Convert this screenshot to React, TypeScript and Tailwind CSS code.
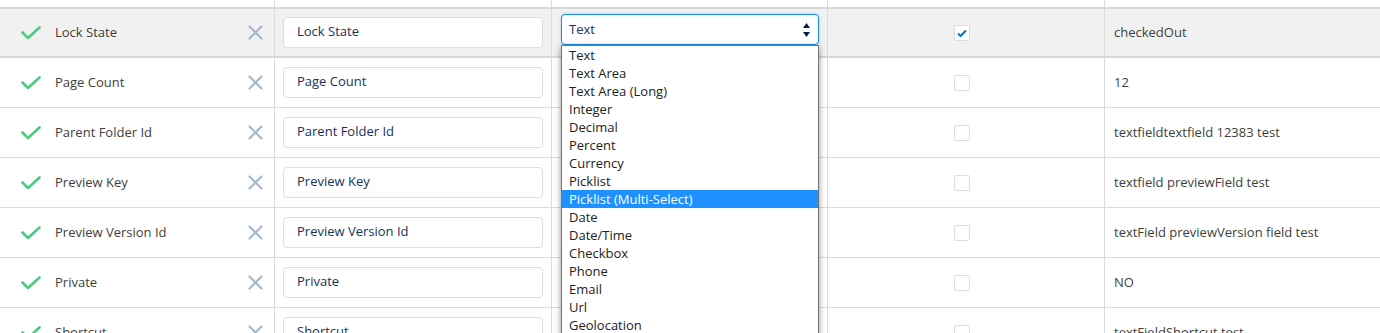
import React from "react";

const rows = [
  { label: "Lock State", value: "checkedOut", checked: true },
  { label: "Page Count", value: "12" },
  { label: "Parent Folder Id", value: "textfieldtextfield 12383 test" },
  { label: "Preview Key", value: "textfield previewField test" },
  { label: "Preview Version Id", value: "textField previewVersion field test" },
  { label: "Private", value: "NO" },
  { label: "Shortcut", value: "textFieldShortcut test" },
];

const types = [
  "Text",
  "Text Area",
  "Text Area (Long)",
  "Integer",
  "Decimal",
  "Percent",
  "Currency",
  "Picklist",
  "Picklist (Multi-Select)",
  "Date",
  "Date/Time",
  "Checkbox",
  "Phone",
  "Email",
  "Url",
  "Geolocation",
  "Lookup",
];

const CheckIcon = () => (
  <svg width="20" height="14" viewBox="0 0 20 14" className="shrink-0">
    <polyline points="1.5,6.5 7,12 18.5,1.5" fill="none" stroke="#4bca81" strokeWidth="2.6" strokeLinecap="round" strokeLinejoin="round" />
  </svg>
);

const RemoveIcon = () => (
  <svg width="15" height="15" viewBox="0 0 15 15" className="shrink-0">
    <path d="M1.5 1.5 L13.5 13.5 M13.5 1.5 L1.5 13.5" stroke="#a8b7c7" strokeWidth="2.2" strokeLinecap="round" />
  </svg>
);

const TypeSelect = ({ open }: { open: boolean }) => (
  <div className="relative -mt-[6px] w-[258px]">
    <div className="flex h-[31px] items-center justify-between rounded-[4px] border border-[#1589ee] bg-white pl-[7px] pr-[8px] text-[13px] text-[#16325c] shadow-[0_0_3px_rgba(21,137,238,0.35)]">
      <span>Text</span>
      <svg width="7" height="16" viewBox="0 0 7 16">
        <path d="M3.5 1 L7 6 L0 6 Z" fill="#061c3f" />
        <path d="M0 10 L7 10 L3.5 15 Z" fill="#061c3f" />
      </svg>
    </div>
    {open && (
      <ul className="absolute left-0 top-full z-10 w-[258px] border border-[#767676] bg-white shadow-[0_2px_6px_rgba(0,0,0,0.45)]">
        {types.map((t) => (
          <li
            key={t}
            className={
              t === "Picklist (Multi-Select)"
                ? "h-[18px] bg-[#1e90ff] pl-[7px] text-[13px] leading-[18px] text-white"
                : "h-[18px] pl-[7px] text-[13px] leading-[18px] text-[#222]"
            }
          >
            {t}
          </li>
        ))}
      </ul>
    )}
  </div>
);

const Checkbox = ({ checked }: { checked?: boolean }) => (
  <div className="flex h-[16px] w-[16px] items-center justify-center rounded-[2px] border border-[#d8dde6] bg-white">
    {checked && (
      <svg width="10" height="8" viewBox="0 0 10 8">
        <polyline points="1,4.5 3.5,7 9,1.5" fill="none" stroke="#0070d2" strokeWidth="2" strokeLinejoin="round" />
      </svg>
    )}
  </div>
);

const gridCols = "grid grid-cols-[274px_277px_276px_277px_1fr]";

export default function App() {
  return (
    <div className="h-[333px] overflow-hidden bg-white font-['Open_Sans',sans-serif] text-[13px]">
      <div className={`${gridCols} h-[7px]`}>
        <div />
        <div className="border-l border-[#dddbda]" />
        <div className="border-l border-[#dddbda]" />
        <div className="border-l border-[#dddbda]" />
        <div className="border-l border-[#dddbda]" />
      </div>
      {rows.map((r, i) => {
        const selected = i === 0;
        return (
          <div
            key={r.label}
            className={
              selected
                ? `${gridCols} h-[51px] border-y-2 border-[#d8d8d8] bg-[#f1f1f1]`
                : `${gridCols} h-[50px] border-b border-[#dddbda] bg-white`
            }
          >
            <div className="flex items-center pl-[21px] pr-[11px]">
              <CheckIcon />
              <span className="ml-[14px] flex-1 text-[#3e3e3c]">{r.label}</span>
              <RemoveIcon />
            </div>
            <div className="flex items-center border-l border-[#dddbda] px-2">
              <div className="-mt-px flex h-[31px] w-[260px] items-center rounded-[4px] border border-[#d8dde6] bg-white pl-[13px] text-[#16325c]">
                {r.label}
              </div>
            </div>
            <div className="flex items-center border-l border-[#dddbda] pl-[9px]">
              {selected && <TypeSelect open />}
            </div>
            <div className="flex items-center border-l border-[#dddbda] pl-[126px]">
              <Checkbox checked={r.checked} />
            </div>
            <div className="flex items-center border-l border-[#dddbda] pl-[9px] text-[#3e3e3c]">
              {r.value}
            </div>
          </div>
        );
      })}
    </div>
  );
}
